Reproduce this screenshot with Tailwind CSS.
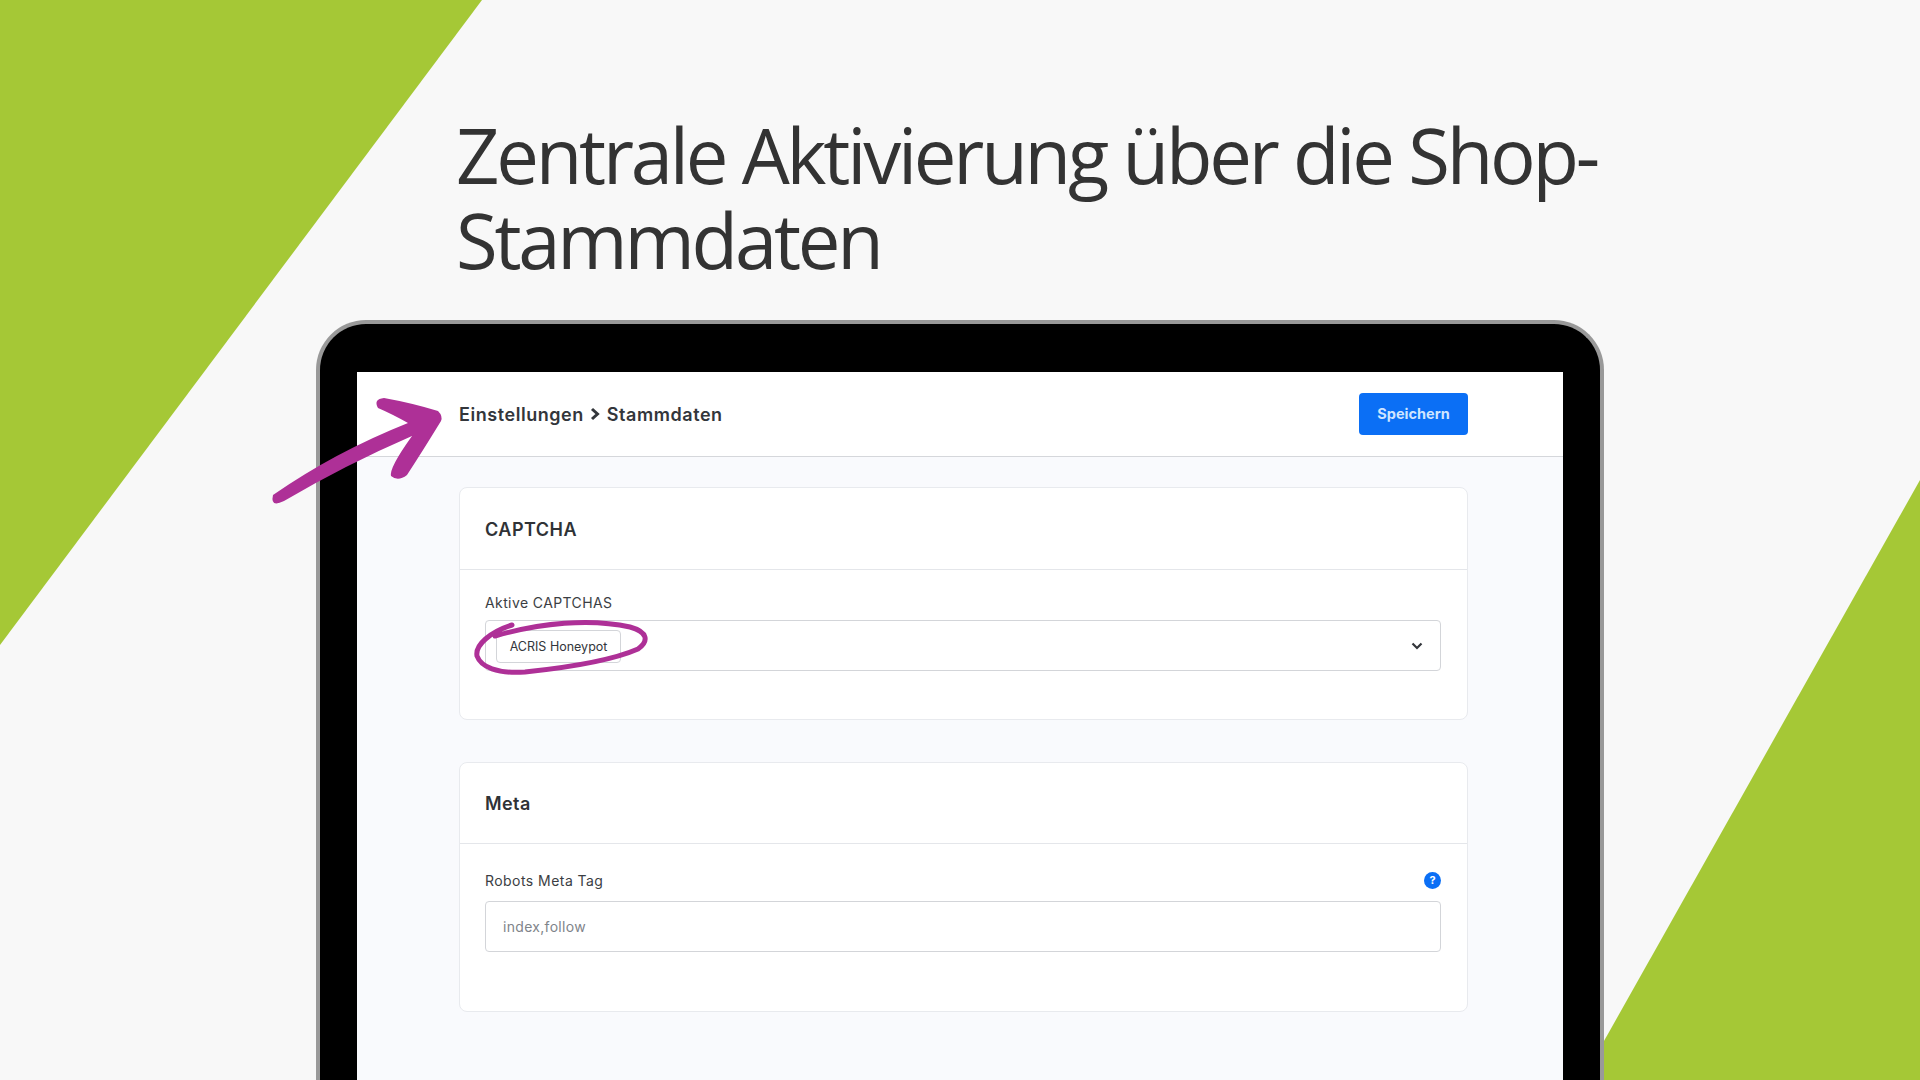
<!DOCTYPE html>
<html lang="de">
<head>
<meta charset="utf-8">
<title>Zentrale Aktivierung</title>
<script src="https://cdn.jsdelivr.net/npm/@tailwindcss/browser@4"></script>
</head>
<body class="m-0">
<div class="relative w-[1920px] h-[1080px] overflow-hidden bg-[#f8f8f8] font-['Inter',sans-serif]">
  <svg class="absolute inset-0" width="1920" height="1080" viewBox="0 0 1920 1080">
    <polygon points="0,0 482,0 0,645" fill="#a5c836"/>
    <polygon points="1920,480 1920,1080 1582,1080" fill="#a5c836"/>
  </svg>

  <div class="relative flex flex-col h-full">
    <h1 class="ml-[456px] mt-[112px] w-[1160px] text-[76px] leading-[85px] tracking-[-3.22px] font-normal text-[#333333] font-['Open_Sans',sans-serif]">Zentrale Aktivierung über die Shop-Stammdaten</h1>

    <div class="ml-[316px] mt-[38px] w-[1288px] flex-1 min-h-0 border-t-[4px] border-x-[4px] border-[#999999] rounded-t-[50px] bg-black pt-[48px] pl-[37px] pr-[37px]">
      <div class="h-full bg-[#f9fafd]">
        <header class="h-[85px] bg-white border-b border-[#d5d7db] flex items-center justify-between pl-[102px] pr-[95px]">
          <div class="flex items-center gap-[6px] text-[18px] font-semibold tracking-[0.55px] text-[#33363b]">
            <span>Einstellungen</span>
            <svg width="11" height="14" viewBox="0 0 11 14" fill="none" stroke="#33363b" stroke-width="3"><path d="M2 2l5.5 5-5.5 5"/></svg>
            <span>Stammdaten</span>
          </div>
          <button class="w-[109px] h-[42px] rounded-[4px] bg-[#0b6ff5] text-[#cfe5ff] text-[14.5px] font-bold">Speichern</button>
        </header>

        <div class="pl-[102px] pr-[95px] pt-[30px] flex flex-col gap-[42px]">
          <section class="h-[233px] bg-white border border-[#e8eaee] rounded-[8px]">
            <div class="h-[82px] border-b border-[#e4e6ea] flex items-center px-[25px] pt-[2px] text-[18px] font-semibold text-[#2f3236] tracking-[0.5px]">CAPTCHA</div>
            <div class="px-[25px] pt-[24px]">
              <label class="block text-[14px] leading-[18px] tracking-[0.4px] text-[#3b3e43]">Aktive CAPTCHAS</label>
              <div class="mt-[8px] h-[51px] w-[956px] border border-[#d3d5d9] rounded-[4px] bg-white flex items-center justify-between pl-[10px] pr-[17px]">
                <span class="h-[33px] w-[125px] mt-[2px] border border-[#d3d5d9] rounded-[4px] bg-white flex items-center justify-center pt-[2px] text-[12.5px] text-[#33363b]">ACRIS Honeypot</span>
                <svg width="12" height="8" viewBox="0 0 12 8" fill="none" stroke="#33363b" stroke-width="2.2"><path d="M1.5 1.5L6 6l4.5-4.5"/></svg>
              </div>
            </div>
          </section>

          <section class="h-[250px] bg-white border border-[#e8eaee] rounded-[8px]">
            <div class="h-[81px] border-b border-[#e4e6ea] flex items-center px-[25px] text-[18px] font-semibold tracking-[0.4px] text-[#2f3236]">Meta</div>
            <div class="px-[25px] pt-[26px]">
              <div class="w-[956px] flex items-center justify-between h-[20px]">
                <label class="text-[14px] tracking-[0.45px] text-[#3b3e43]">Robots Meta Tag</label>
                <span class="w-[17px] h-[17px] rounded-full bg-[#0b6ff5] text-white text-[11px] font-bold flex items-center justify-center">?</span>
              </div>
              <div class="mt-[11px] h-[51px] w-[956px] border border-[#d3d5d9] rounded-[4px] bg-white flex items-center pl-[17px] text-[14px] tracking-[0.3px] text-[#80848a]">index,follow</div>
            </div>
          </section>
        </div>
      </div>
    </div>
  </div>

  <svg class="absolute inset-0 pointer-events-none" width="1920" height="1080" viewBox="0 0 1920 1080">
    <path d="M273 495 Q335 452 408 423 Q392 414 378 408 Q373 399 384 398 Q412 403 438 411 Q443 416 441 421 Q422 452 407 475 Q398 482 391 476 Q389 468 412 436 Q345 465 284 501 Q270 508 273 495Z" fill="#ae3097"/>
    <path d="M495 636 C540 623 590 618 630 627 C648 632 649 641 638 649 C613 660 573 667 525 672 C497 674 481 667 477 656 C475 645 490 632 512 625" fill="none" stroke="#ae3097" stroke-width="5" stroke-linecap="round"/>
  </svg>
</div>
</body>
</html>
